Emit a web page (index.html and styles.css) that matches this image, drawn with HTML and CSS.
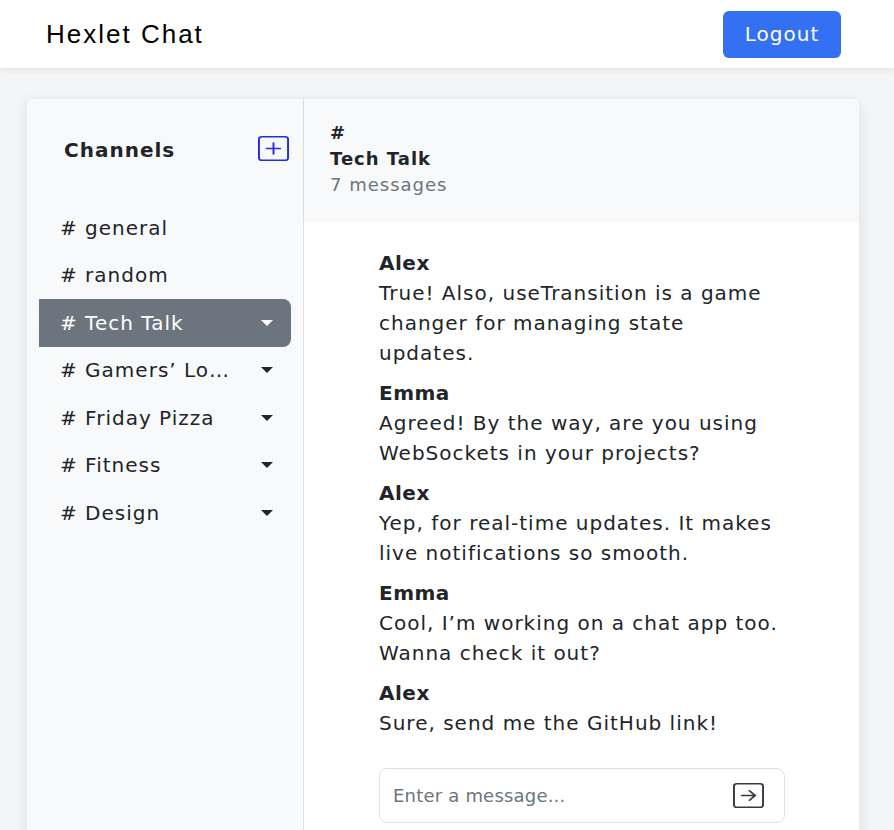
FILE: index.html
```html
<!DOCTYPE html>
<html lang="en">
<head>
<meta charset="utf-8">
<title>Hexlet Chat</title>
<link rel="stylesheet" href="styles.css">
</head>
<body>
<nav class="navbar">
  <a class="brand" href="#">Hexlet Chat</a>
  <button class="logout" type="button">Logout</button>
</nav>
<main class="card">
  <aside class="sidebar">
    <div class="side-head">
      <b class="side-title">Channels</b>
      <button class="add-btn" type="button" aria-label="Add channel">
        <svg viewBox="0 0 16 16" width="31" height="25" preserveAspectRatio="none" fill="currentColor">
          <path d="M14 1a1 1 0 0 1 1 1v12a1 1 0 0 1-1 1H2a1 1 0 0 1-1-1V2a1 1 0 0 1 1-1h12zM2 0a2 2 0 0 0-2 2v12a2 2 0 0 0 2 2h12a2 2 0 0 0 2-2V2a2 2 0 0 0-2-2H2z"/>
          <path d="M8 4a.5.5 0 0 1 .5.5v3h3a.5.5 0 0 1 0 1h-3v3a.5.5 0 0 1-1 0v-3h-3a.5.5 0 0 1 0-1h3v-3A.5.5 0 0 1 8 4z"/>
        </svg>
      </button>
    </div>
    <ul class="channels">
      <li class="channel"><span class="name"># general</span></li>
      <li class="channel"><span class="name"># random</span></li>
      <li class="channel active"><span class="name"># Tech Talk</span><span class="caret"></span></li>
      <li class="channel"><span class="name"># Gamers’ Lounge</span><span class="caret"></span></li>
      <li class="channel"><span class="name"># Friday Pizza</span><span class="caret"></span></li>
      <li class="channel"><span class="name"># Fitness</span><span class="caret"></span></li>
      <li class="channel"><span class="name"># Design</span><span class="caret"></span></li>
    </ul>
  </aside>
  <section class="chat">
    <header class="chat-head">
      <b>#</b>
      <b>Tech Talk</b>
      <span class="count">7 messages</span>
    </header>
    <div class="messages">
      <div class="msg"><b>Alex</b><p>True! Also, useTransition is a game changer for managing state updates.</p></div>
      <div class="msg"><b>Emma</b><p>Agreed! By the way, are you using WebSockets in your projects?</p></div>
      <div class="msg"><b>Alex</b><p>Yep, for real-time updates. It makes live notifications so smooth.</p></div>
      <div class="msg"><b>Emma</b><p>Cool, I’m working on a chat app too. Wanna check it out?</p></div>
      <div class="msg"><b>Alex</b><p>Sure, send me the GitHub link!</p></div>
      <form class="composer">
        <input class="composer-input" type="text" placeholder="Enter a message...">
        <button class="send" type="button" aria-label="Send">
          <svg viewBox="0 0 16 16" width="31" height="25" preserveAspectRatio="none" fill="currentColor">
            <path fill-rule="evenodd" d="M15 2a1 1 0 0 0-1-1H2a1 1 0 0 0-1 1v12a1 1 0 0 0 1 1h12a1 1 0 0 0 1-1V2zM0 2a2 2 0 0 1 2-2h12a2 2 0 0 1 2 2v12a2 2 0 0 1-2 2H2a2 2 0 0 1-2-2V2zm4.5 5.5a.5.5 0 0 0 0 1h5.793l-2.147 2.146a.5.5 0 0 0 .708.708l3-3a.5.5 0 0 0 0-.708l-3-3a.5.5 0 1 0-.708.708L10.293 7.5H4.5z"/>
          </svg>
        </button>
      </form>
    </div>
  </section>
</main>
</body>
</html>
```

FILE: styles.css
```css
* { box-sizing: border-box; }
html, body { height: 100%; }
body {
  margin: 0;
  overflow: hidden;
  background: #f4f5f7;
  color: #212529;
  font-family: "DejaVu Sans", Verdana, sans-serif;
  font-size: 20px;
  letter-spacing: 1px;
}
.navbar {
  height: 68px;
  background: #fff;
  display: flex;
  align-items: center;
  justify-content: space-between;
  padding: 0 53px 0 46px;
  box-shadow: 0 2px 6px rgba(0,0,0,0.08);
  position: relative;
}
.brand {
  font-family: "Liberation Sans", Arial, sans-serif;
  font-size: 26px;
  color: #000;
  text-decoration: none;
  letter-spacing: 2px;
}
.logout {
  width: 118px;
  height: 47px;
  border: none;
  border-radius: 6px;
  background: #3370f2;
  color: #fff;
  font-family: "DejaVu Sans", sans-serif;
  font-size: 20px;
  letter-spacing: 1px;
}
.card {
  margin: 31px 35px 0 27px;
  height: 780px;
  display: flex;
  background: #fff;
  border-radius: 6px;
  box-shadow: 0 4px 16px rgba(0,0,0,0.1);
  overflow: hidden;
}
.sidebar {
  width: 277px;
  flex: none;
  background: #f8f9fa;
  border-right: 1px solid #dee2e6;
  padding: 0 12px;
}
.side-head {
  display: flex;
  justify-content: space-between;
  align-items: flex-start;
  padding: 37px 2px 0 25px;
  height: 105px;
}
.side-title { font-size: 20px; font-weight: 700; line-height: 28px; color: #212529; }
.add-btn {
  border: none;
  background: none;
  padding: 0;
  color: #2828ee;
  display: flex;
}
.channels { list-style: none; margin: 0; padding: 0; }
.channel {
  height: 47.5px;
  display: flex;
  align-items: center;
  justify-content: space-between;
  padding: 0 18px 0 21px;
  font-size: 20px;
  border-radius: 0 8px 8px 0;
}
.channel .name { white-space: nowrap; overflow: hidden; text-overflow: ellipsis; max-width: 170px; }
.channel.active { background: #6c757d; color: #fff; }
.caret {
  width: 0; height: 0;
  border-top: 6px solid currentColor;
  border-left: 6px solid transparent;
  border-right: 6px solid transparent;
}
.chat { flex: 1; display: flex; flex-direction: column; }
.chat-head {
  height: 120px;
  background: #f8f9fa;
  padding: 21px 26px 0;
  display: flex;
  flex-direction: column;
  line-height: 26px;
  font-size: 18px;
  box-shadow: 0 2px 4px rgba(0,0,0,0.05);
}
.chat-head .count { color: #6c757d; }
.messages { padding: 29px 74px 0 75px; }
.msg { margin-bottom: 10px; line-height: 30px; }
.msg b { display: block; letter-spacing: 0.5px; }
.msg p { margin: 0; max-width: 403px; }
.composer {
  margin-top: 30px;
  height: 55px;
  border: 1px solid #dee2e6;
  border-radius: 8px;
  display: flex;
  align-items: center;
  padding: 0 20px 0 13px;
}
.composer-input {
  flex: 1;
  border: none;
  outline: none;
  font-family: inherit;
  font-size: 18px;
  letter-spacing: 0.2px;
  color: #212529;
  background: transparent;
  padding: 0;
}
.composer-input::placeholder { color: #6c757d; }
.send { border: none; background: none; padding: 0; color: #343a40; display: flex; }
```
